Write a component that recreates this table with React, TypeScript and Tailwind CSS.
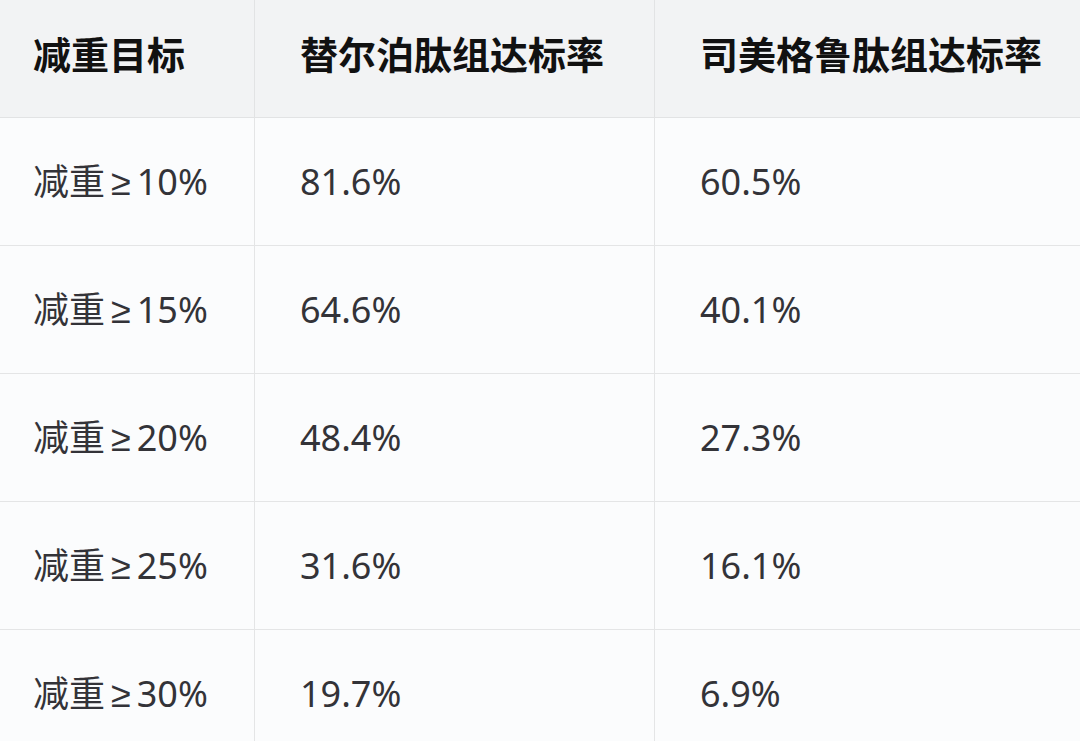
import React from "react"

const rows = [
  ["10%", "81.6%", "60.5%"],
  ["15%", "64.6%", "40.1%"],
  ["20%", "48.4%", "27.3%"],
  ["25%", "31.6%", "16.1%"],
  ["30%", "19.7%", "6.9%"],
]

const font = { fontFamily: '"Noto Sans", "Liberation Sans", "Noto Sans CJK SC", sans-serif' }

export default function App() {
  return (
    <div className="w-[1080px] h-[741px] overflow-hidden bg-[#fbfcfd]" style={font}>
      <div className="grid grid-cols-[255px_400px_425px] h-[118px] bg-[#f2f3f4] border-b border-[#e2e3e4]">
        <div className="flex items-center pl-[33px] border-r border-[#e2e3e4] text-[38px] font-bold text-[#111] pb-[8px]">减重目标</div>
        <div className="flex items-center pl-[45px] border-r border-[#e2e3e4] text-[38px] font-bold text-[#111] pb-[8px]">替尔泊肽组达标率</div>
        <div className="flex items-center pl-[45px] text-[38px] font-bold text-[#111] pb-[8px]">司美格鲁肽组达标率</div>
      </div>
      {rows.map((r, i) => (
        <div key={i} className="grid grid-cols-[255px_400px_425px] h-[128px] border-b border-[#e4e5e6]">
          <div className="flex items-center pl-[33px] border-r border-[#e4e5e6] text-[36px] text-[#333338]">
            减重<span className="mx-[6px]">≥</span>{r[0]}
          </div>
          <div className="flex items-center pl-[45px] border-r border-[#e4e5e6] text-[36px] text-[#333338]">{r[1]}</div>
          <div className="flex items-center pl-[45px] text-[36px] text-[#333338]">{r[2]}</div>
        </div>
      ))}
    </div>
  )
}
